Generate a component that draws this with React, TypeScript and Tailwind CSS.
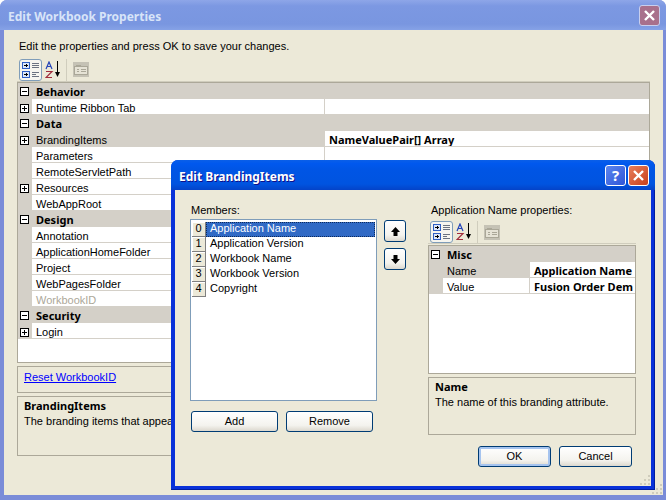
import React from 'react';

const uiFont = 'font-["Liberation_Sans",Arial,sans-serif]';
const boldFont = 'font-["Noto_Sans",sans-serif] font-bold';

type Row = { label: string; kind?: 'head'; plus?: boolean; value?: string; muted?: boolean; selected?: boolean };

const mainRows: Row[] = [
  { label: 'Behavior', kind: 'head' },
  { label: 'Runtime Ribbon Tab', plus: true },
  { label: 'Data', kind: 'head' },
  { label: 'BrandingItems', plus: true, value: 'NameValuePair[] Array', selected: true },
  { label: 'Parameters' },
  { label: 'RemoteServletPath' },
  { label: 'Resources', plus: true },
  { label: 'WebAppRoot' },
  { label: 'Design', kind: 'head' },
  { label: 'Annotation' },
  { label: 'ApplicationHomeFolder' },
  { label: 'Project' },
  { label: 'WebPagesFolder' },
  { label: 'WorkbookID', muted: true },
  { label: 'Security', kind: 'head' },
  { label: 'Login', plus: true },
];

const brandingRows: Row[] = [
  { label: 'Misc', kind: 'head' },
  { label: 'Name', value: 'Application Name', selected: true },
  { label: 'Value', value: 'Fusion Order Dem' },
];

const members = ['Application Name', 'Application Version', 'Workbook Name', 'Workbook Version', 'Copyright'];

function ExpandBox({ open }: { open?: boolean }) {
  return (
    <svg width="9" height="9" viewBox="0 0 9 9" className="shrink-0" shapeRendering="crispEdges">
      <rect x="0.5" y="0.5" width="8" height="8" fill="#fff" stroke="#000" />
      <path d="M2 4.5h5" stroke="#000" />
      {!open && <path d="M4.5 2v5" stroke="#000" />}
    </svg>
  );
}

function CategoryIcon() {
  return (
    <svg width="17" height="16" viewBox="0 0 17 16" shapeRendering="crispEdges">
      <rect x="0.5" y="0.5" width="7" height="6" fill="#dbe6fa" stroke="#2f5fc4" />
      <path d="M2 3.5h4M4 2v3" stroke="#000" />
      <rect x="0.5" y="9.5" width="7" height="6" fill="#dbe6fa" stroke="#2f5fc4" />
      <path d="M2 12.5h4M4 11v3" stroke="#000" />
      <path d="M10 1.5h7M10 3.5h7M10 5.5h7M10 10.5h7M10 12.5h4M10 14.5h7" stroke="#6b7280" />
    </svg>
  );
}

function SortIcon() {
  return (
    <svg width="18" height="18" viewBox="0 0 18 18" fill="none">
      <path d="M1 8L4 1l3 7M2.2 5.5h3.6" stroke="#2444b8" strokeWidth="1.2" />
      <path d="M1 10.5h6L1 16.5h6" stroke="#a02c3c" strokeWidth="1.2" />
      <path d="M12.5 0v12" stroke="#000" />
      <path d="M10 11h5l-2.5 5z" fill="#000" />
    </svg>
  );
}

function PagesIcon() {
  return (
    <svg width="16" height="15" viewBox="0 0 16 15" shapeRendering="crispEdges">
      <rect width="16" height="15" fill="#c5c2b5" />
      <rect x="1.5" y="4.5" width="13" height="8" fill="#e6e3d6" stroke="#aaa798" />
      <path d="M3 3.5h5M4 7.5h2M8 7.5h5M4 9.5h2M8 9.5h5" stroke="#aaa798" fill="none" />
    </svg>
  );
}

function Toolbar({ className }: { className: string }) {
  return (
    <div className={`flex items-center ${className}`}>
      <div className="flex h-[22px] w-[23px] items-center justify-center rounded-[3px] border border-[#7f9db9] bg-[#f6f5ef]">
        <CategoryIcon />
      </div>
      <div className="ml-[2px] flex h-[22px] w-[20px] items-center justify-center">
        <SortIcon />
      </div>
      <div className="ml-[2px] h-[22px] w-px bg-[#d0cdbd]" />
      <div className="ml-[6px]">
        <PagesIcon />
      </div>
    </div>
  );
}

function PropertyGrid({ rows, className, splitWidth }: { rows: Row[]; className: string; splitWidth: string }) {
  return (
    <div className={`overflow-hidden border border-[#aca899] bg-white ${className}`}>
      {rows.map((r) =>
        r.kind === 'head' ? (
          <div key={r.label} className="flex h-[16px] items-center bg-[#d4d0c8] pl-[2px]">
            <ExpandBox open />
            <span className={`pl-[7px] ${boldFont}`}>{r.label}</span>
          </div>
        ) : (
          <div key={r.label} className="flex h-[16px]">
            <div className="flex w-[14px] shrink-0 items-center bg-[#d4d0c8] pt-[2px] pl-[2px]">{r.plus && <ExpandBox />}</div>
            <div className={`flex ${splitWidth} shrink-0 items-center border-r border-b border-[#d4d0c8] pt-[3px] pl-[4px] ${r.selected ? 'bg-[#d4d0c8]' : ''} ${r.muted ? 'text-[#aca899]' : ''}`}>
              {r.label}
            </div>
            <div className={`flex min-w-0 flex-1 items-center overflow-hidden border-b border-[#d4d0c8] pt-px pl-[4px] whitespace-nowrap ${boldFont}`}>
              {r.value}
            </div>
          </div>
        ),
      )}
    </div>
  );
}

function XpButton({ children, className, focused }: { children: React.ReactNode; className: string; focused?: boolean }) {
  return (
    <div className={`flex h-[21px] items-center justify-center rounded-[3px] border border-[#003c74] bg-[linear-gradient(#ffffff,#f4f3ee_70%,#dcd8ce)] ${focused ? 'shadow-[inset_0_0_0_2px_#a6c4ef]' : ''} ${className}`}>
      {children}
    </div>
  );
}

function Grip({ color }: { color: string }) {
  return (
    <svg width="12" height="12" viewBox="0 0 12 12" shapeRendering="crispEdges" fill={color}>
      <path d="M9 1h2v2H9zM5 5h2v2H5zM9 5h2v2H9zM1 9h2v2H1zM5 9h2v2H5zM9 9h2v2H9z" />
    </svg>
  );
}

function EditBrandingDialog() {
  return (
    <div className="absolute top-[160px] left-[171px] flex h-[330px] w-[484px] flex-col rounded-t-[7px] bg-[#0831d9] shadow-[inset_-1px_-1px_0_#001ea0]">
      <div className="flex h-[30px] shrink-0 items-center rounded-t-[7px] bg-[linear-gradient(#0a5fe8,#0058ee_12%,#0055e5_30%,#0054e0_80%,#0443c8)] pr-[6px] pl-[8px]">
        <span className={`pt-[4px] text-[12px] text-white [text-shadow:1px_1px_0_#0f1089] ${boldFont}`}>Edit BrandingItems</span>
        <div className="ml-auto flex gap-[2px]">
          <div className={`flex h-[21px] w-[21px] items-center justify-center rounded-[3px] border border-white bg-[linear-gradient(135deg,#5c86ee,#2e55d8)] text-[15px] leading-none text-white ${boldFont}`}>?</div>
          <div className="flex h-[21px] w-[21px] items-center justify-center rounded-[3px] border border-white bg-[linear-gradient(135deg,#e87e5c,#c8401c)]">
            <svg width="13" height="13" viewBox="0 0 13 13">
              <path d="M2 2l9 9M11 2l-9 9" stroke="#fff" strokeWidth="2.4" />
            </svg>
          </div>
        </div>
      </div>
      <div className="relative mx-[4px] mb-[4px] flex flex-1 bg-[#ece9d8]">
        <div className="ml-[15px] w-[187px] shrink-0 pt-[14px]">
          <div className="pl-[1px] leading-[13px]">Members:</div>
          <div className="mt-[2px] h-[182px] border border-[#7f9db9] bg-white pt-[2px] pl-px">
            {members.map((m, i) => (
              <div key={m} className="flex h-[15px] items-center">
                <div className="flex h-[15px] w-[14px] shrink-0 items-center justify-center border-r border-b border-[#808080] bg-[#ece9d8] pb-[2px] shadow-[inset_1px_1px_0_#fff]">{i}</div>
                <div className={`flex h-[15px] items-center pb-[2px] pl-[4px] ${i === 0 ? 'w-[169px] bg-[#316ac5] text-white outline-1 -outline-offset-1 outline-dotted outline-[#0c2a5c]' : ''}`}>{m}</div>
              </div>
            ))}
          </div>
          <div className="mt-[10px] flex gap-[8px] pl-px">
            <XpButton className="w-[87px]">Add</XpButton>
            <XpButton className="w-[87px]">Remove</XpButton>
          </div>
        </div>
        <div className="ml-[7px] flex w-[22px] shrink-0 flex-col gap-[6px] pt-[30px]">
          <XpButton className="h-[22px]!">
            <svg width="11" height="11" viewBox="0 0 11 11"><path d="M5.5 1L10 6H7.5v4h-4V6H1z" fill="#000" /></svg>
          </XpButton>
          <XpButton className="h-[22px]!">
            <svg width="11" height="11" viewBox="0 0 11 11"><path d="M5.5 10L10 5H7.5V1h-4v4H1z" fill="#000" /></svg>
          </XpButton>
        </div>
        <div className="ml-[22px] w-[208px] shrink-0 pt-[14px]">
          <div className="pl-[3px] leading-[13px]">Application Name properties:</div>
          <Toolbar className="mt-[4px] h-[23px] border-b border-[#d0cdbd] pl-[2px]" />
          <PropertyGrid rows={brandingRows} className="mt-px h-[129px]" splitWidth="w-[87px]" />
          <div className="mt-[3px] h-[58px] border border-[#aca899] px-[6px] pt-[2px] leading-[15px]">
            <div className={`-mt-px mb-px ${boldFont}`}>Name</div>
            <div>The name of this branding attribute.</div>
          </div>
          <div className="mt-[11px] flex justify-end gap-[8px] pr-[4px]">
            <XpButton focused className="w-[73px]">OK</XpButton>
            <XpButton className="w-[73px]">Cancel</XpButton>
          </div>
        </div>
        <div className="absolute right-0 bottom-0">
          <Grip color="#cfccbc" />
        </div>
      </div>
    </div>
  );
}

export default function App() {
  return (
    <div className={`relative h-[500px] w-[666px] overflow-hidden text-[11px] leading-none text-black ${uiFont}`}>
      <div className="flex h-full flex-col rounded-t-[7px] bg-[#7a8cd8]">
        <div className="flex h-[30px] shrink-0 items-center rounded-t-[7px] bg-[linear-gradient(#8ea6e8,#7c98e2_20%,#7996e0_80%,#86a2e6)] pr-[6px] pl-[8px]">
          <span className={`pt-[4px] text-[12px] text-[#d8e4f8] ${boldFont}`}>Edit Workbook Properties</span>
          <div className="ml-auto flex h-[21px] w-[21px] items-center justify-center rounded-[3px] border border-[#c8cfee] bg-[#a8708c]">
            <svg width="13" height="13" viewBox="0 0 13 13">
              <path d="M2 2l9 9M11 2l-9 9" stroke="#fff" strokeWidth="2.4" />
            </svg>
          </div>
        </div>
        <div className="relative mr-[3px] mb-[5px] ml-[4px] flex-1 bg-[#ece9d8] pt-[10px] pl-[13px]">
          <div className="pl-[2px] leading-[13px]">Edit the properties and press OK to save your changes.</div>
          <Toolbar className="mt-[5px] h-[24px] w-[633px] border-b border-[#d0cdbd] pl-[2px]" />
          <PropertyGrid rows={mainRows} className="h-[281px] w-[633px]" splitWidth="w-[293px]" />
          <div className="mt-[3px] flex h-[27px] w-[633px] items-center border border-[#aca899] pb-[4px] pl-[6px]">
            <span className="text-[#0000ff] underline">Reset WorkbookID</span>
          </div>
          <div className="mt-[3px] h-[60px] w-[633px] border border-[#aca899] px-[6px] pt-[2px] leading-[15px]">
            <div className={`-mt-px mb-px ${boldFont}`}>BrandingItems</div>
            <div>The branding items that appear</div>
          </div>
          <div className="absolute right-0 bottom-0">
            <Grip color="#cfccbc" />
          </div>
        </div>
      </div>
      <EditBrandingDialog />
    </div>
  );
}
